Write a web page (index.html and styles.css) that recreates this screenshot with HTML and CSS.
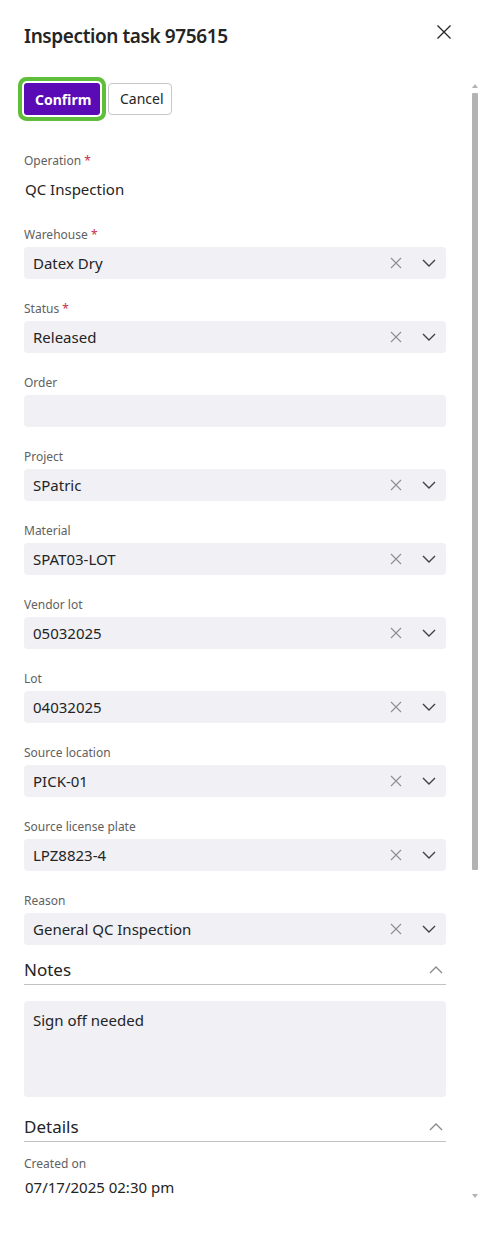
FILE: index.html
```html
<!DOCTYPE html>
<html lang="en">
<head>
<meta charset="utf-8">
<title>Inspection task 975615</title>
<link rel="stylesheet" href="styles.css">
</head>
<body>
<div class="panel">
  <header class="head">
    <h1 class="title">Inspection task 975615</h1>
    <button class="close" aria-label="Close">
      <svg width="16" height="16" viewBox="0 0 16 16"><path d="M1.5 1.5 L14.5 14.5 M14.5 1.5 L1.5 14.5" stroke="#242424" stroke-width="1.3" fill="none"/></svg>
    </button>
  </header>

  <div class="actions">
    <button class="btn btn-primary">Confirm</button>
    <button class="btn btn-secondary">Cancel</button>
  </div>

  <div class="form">
    <div class="field">
      <div class="label">Operation <span class="req">*</span></div>
      <div class="static">QC Inspection</div>
    </div>

    <div class="field">
      <div class="label">Warehouse <span class="req">*</span></div>
      <div class="select"><span class="val">Datex Dry</span><span class="icons"><svg class="clr" width="12" height="12" viewBox="0 0 12 12"><path d="M1 1 L11 11 M11 1 L1 11"/></svg><svg class="chev" width="14" height="8" viewBox="0 0 14 8"><path d="M1 1 L7 7 L13 1"/></svg></span></div>
    </div>

    <div class="field">
      <div class="label">Status <span class="req">*</span></div>
      <div class="select"><span class="val">Released</span><span class="icons"><svg class="clr" width="12" height="12" viewBox="0 0 12 12"><path d="M1 1 L11 11 M11 1 L1 11"/></svg><svg class="chev" width="14" height="8" viewBox="0 0 14 8"><path d="M1 1 L7 7 L13 1"/></svg></span></div>
    </div>

    <div class="field">
      <div class="label">Order</div>
      <div class="select"><span class="val"></span></div>
    </div>

    <div class="field">
      <div class="label">Project</div>
      <div class="select"><span class="val">SPatric</span><span class="icons"><svg class="clr" width="12" height="12" viewBox="0 0 12 12"><path d="M1 1 L11 11 M11 1 L1 11"/></svg><svg class="chev" width="14" height="8" viewBox="0 0 14 8"><path d="M1 1 L7 7 L13 1"/></svg></span></div>
    </div>

    <div class="field">
      <div class="label">Material</div>
      <div class="select"><span class="val">SPAT03-LOT</span><span class="icons"><svg class="clr" width="12" height="12" viewBox="0 0 12 12"><path d="M1 1 L11 11 M11 1 L1 11"/></svg><svg class="chev" width="14" height="8" viewBox="0 0 14 8"><path d="M1 1 L7 7 L13 1"/></svg></span></div>
    </div>

    <div class="field">
      <div class="label">Vendor lot</div>
      <div class="select"><span class="val">05032025</span><span class="icons"><svg class="clr" width="12" height="12" viewBox="0 0 12 12"><path d="M1 1 L11 11 M11 1 L1 11"/></svg><svg class="chev" width="14" height="8" viewBox="0 0 14 8"><path d="M1 1 L7 7 L13 1"/></svg></span></div>
    </div>

    <div class="field">
      <div class="label">Lot</div>
      <div class="select"><span class="val">04032025</span><span class="icons"><svg class="clr" width="12" height="12" viewBox="0 0 12 12"><path d="M1 1 L11 11 M11 1 L1 11"/></svg><svg class="chev" width="14" height="8" viewBox="0 0 14 8"><path d="M1 1 L7 7 L13 1"/></svg></span></div>
    </div>

    <div class="field">
      <div class="label">Source location</div>
      <div class="select"><span class="val">PICK-01</span><span class="icons"><svg class="clr" width="12" height="12" viewBox="0 0 12 12"><path d="M1 1 L11 11 M11 1 L1 11"/></svg><svg class="chev" width="14" height="8" viewBox="0 0 14 8"><path d="M1 1 L7 7 L13 1"/></svg></span></div>
    </div>

    <div class="field">
      <div class="label">Source license plate</div>
      <div class="select"><span class="val">LPZ8823-4</span><span class="icons"><svg class="clr" width="12" height="12" viewBox="0 0 12 12"><path d="M1 1 L11 11 M11 1 L1 11"/></svg><svg class="chev" width="14" height="8" viewBox="0 0 14 8"><path d="M1 1 L7 7 L13 1"/></svg></span></div>
    </div>

    <div class="field">
      <div class="label">Reason</div>
      <div class="select"><span class="val">General QC Inspection</span><span class="icons"><svg class="clr" width="12" height="12" viewBox="0 0 12 12"><path d="M1 1 L11 11 M11 1 L1 11"/></svg><svg class="chev" width="14" height="8" viewBox="0 0 14 8"><path d="M1 1 L7 7 L13 1"/></svg></span></div>
    </div>
  </div>

  <section class="section notes">
    <div class="sec-head"><span class="sec-title">Notes</span><svg class="up" width="14" height="8" viewBox="0 0 14 8"><path d="M1 7 L7 1 L13 7"/></svg></div>
    <div class="textarea">Sign off needed</div>
  </section>

  <section class="section details">
    <div class="sec-head"><span class="sec-title">Details</span><svg class="up" width="14" height="8" viewBox="0 0 14 8"><path d="M1 7 L7 1 L13 7"/></svg></div>
    <div class="label created">Created on</div>
    <div class="static date">07/17/2025 02:30 pm</div>
  </section>

  <div class="scrollbar" aria-hidden="true">
    <div class="arrow arrow-up"></div>
    <div class="thumb"></div>
    <div class="arrow arrow-down"></div>
  </div>
</div>
</body>
</html>
```

FILE: styles.css
```css
* { box-sizing: border-box; }
html, body { margin: 0; padding: 0; background: #fff; }
body {
  font-family: "Noto Sans", "Open Sans", sans-serif;
  color: #242424;
  width: 480px;
  height: 1256px;
  overflow: hidden;
}
.panel {
  position: relative;
  padding: 0 34px 0 24px;
  height: 1256px;
}
.head {
  display: flex;
  align-items: center;
  justify-content: space-between;
  height: 72px;
}
.title {
  margin: 0;
  font-size: 19px;
  letter-spacing: -0.4px;
  font-weight: 600;
  line-height: 28px;
  color: #242424;
}
.close {
  border: 0;
  background: none;
  padding: 0;
  margin-right: -6px;
  margin-top: -8px;
  width: 16px;
  height: 16px;
  display: flex;
}
.actions {
  display: flex;
  gap: 8px;
  margin-top: 11px;
  align-items: center;
}
.btn {
  font-family: inherit;
  font-size: 14px;
  height: 32px;
  border-radius: 4px;
  padding: 0 11px;
  cursor: pointer;
}
.btn-primary {
  background: #5b0bb5;
  color: #fff;
  font-weight: 700;
  border: 0;
  width: 76px;
  box-shadow: 0 0 0 2px #fff, 0 0 0 6px #5fbf3a;
  border-radius: 3px;
}
.btn-secondary {
  background: #fff;
  color: #242424;
  border: 1px solid #c7c7c7;
  width: 64px;
  margin-top: -1px;
}
.form {
  margin-top: 38px;
  display: flex;
  flex-direction: column;
  gap: 22px;
}
.field {
  display: flex;
  flex-direction: column;
  gap: 4px;
}
.label {
  font-size: 12px;
  line-height: 16px;
  color: #616161;
}
.req { color: #c4314b; }
.static {
  height: 32px;
  line-height: 32px;
  font-size: 15px;
  padding-left: 1px;
  color: #242424;
}
.select {
  height: 32px;
  background: #f0f0f5;
  border-radius: 4px;
  display: flex;
  align-items: center;
  justify-content: space-between;
  padding: 0 10px 0 9px;
}
.val {
  font-size: 15px;
  color: #242424;
}
.icons {
  display: flex;
  align-items: center;
  gap: 20px;
}
.clr path {
  stroke: #8f8f8f;
  stroke-width: 1.1;
  fill: none;
}
.chev path, .up path {
  stroke: #424242;
  stroke-width: 1.4;
  fill: none;
}
.up path { stroke: #8a8a8a; stroke-width: 1.3; }
.sec-head {
  display: flex;
  align-items: center;
  justify-content: space-between;
  height: 29px;
  border-bottom: 1px solid #c2c2c2;
  padding-right: 3px;
}
.sec-title {
  font-size: 17px;
  line-height: 24px;
  color: #242424;
}
.notes { margin-top: 11px; }
.textarea {
  margin-top: 16px;
  height: 96px;
  background: #f0f0f5;
  border-radius: 4px;
  padding: 9px 9px;
  font-size: 15px;
  line-height: 20px;
}
.details { margin-top: 16px; }
.created { margin-top: 14px; }
.date { height: 32px; line-height: 32px; margin-top: -1px; }
.scrollbar {
  position: absolute;
  top: 82px;
  left: 472px;
  width: 6px;
  height: 1120px;
}
.thumb {
  position: absolute;
  top: 11px;
  left: 0;
  width: 6px;
  height: 777px;
  background: #b3b3b3;
  border-radius: 1px;
}
.arrow {
  position: absolute;
  left: 0;
  width: 0;
  height: 0;
  border-left: 3px solid transparent;
  border-right: 3px solid transparent;
}
.arrow-up { top: 2px; border-bottom: 4px solid #b3b3b3; }
.arrow-down { top: 1112px; border-top: 4px solid #b3b3b3; }
```
